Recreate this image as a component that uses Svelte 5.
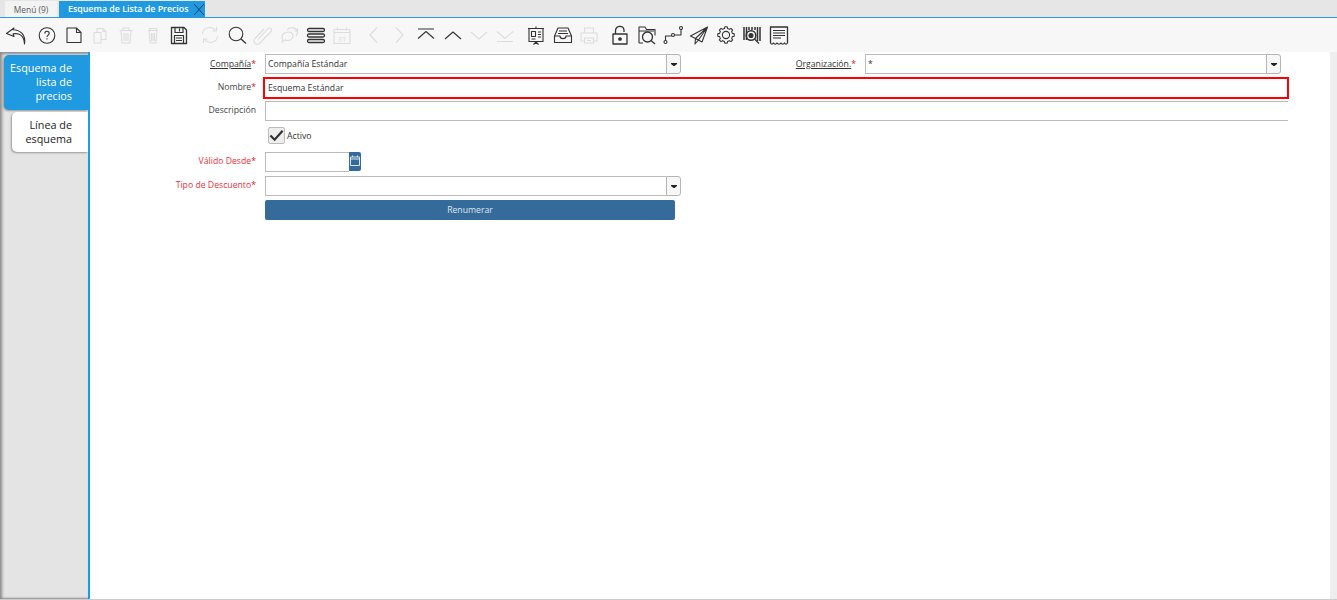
<script>
  const groups = [
    [{ k: 'undo' }],
    [{ k: 'help' }, { k: 'new' }, { k: 'copy', off: true }, { k: 'del', off: true }, { k: 'del', off: true, narrow: true }, { k: 'save' }],
    [{ k: 'refresh', off: true }, { k: 'search' }, { k: 'clip', off: true }, { k: 'chat', off: true }, { k: 'rows' }, { k: 'cal', off: true }],
    [{ k: 'prev', off: true }, { k: 'next', off: true }, { k: 'top' }, { k: 'up' }, { k: 'down', off: true }, { k: 'bottom', off: true }],
    [{ k: 'board' }, { k: 'tray' }, { k: 'print', off: true }],
    [{ k: 'lock' }, { k: 'folder' }, { k: 'route' }, { k: 'send' }, { k: 'gear' }, { k: 'barcode' }, { k: 'report' }]
  ];

  const gearPath = (() => {
    const teeth = 8, cx = 13, cy = 13, ro = 8.3, ri = 6.6;
    const pts = [];
    for (let i = 0; i < teeth; i++) {
      const a = (i / teeth) * Math.PI * 2;
      const s = Math.PI / teeth;
      [[ri, -s * 0.62], [ro, -s * 0.36], [ro, s * 0.36], [ri, s * 0.62]].forEach(([r, d]) => {
        pts.push((cx + r * Math.cos(a + d)).toFixed(2) + ' ' + (cy + r * Math.sin(a + d)).toFixed(2));
      });
    }
    return 'M' + pts.join('L') + 'z';
  })();
</script>

{#snippet dropdown()}
  <span class="drop"><svg width="6" height="3" viewBox="0 0 6 3"><path d="M0 0h6v1L3.500 3h-1L0 1z" fill="#222" /></svg></span>
{/snippet}

<div class="page">
  <header class="tabs">
    <div class="tab">Menú (9)</div>
    <div class="tab active">
      <span>Esquema de Lista de Precios</span>
      <svg width="12" height="13" viewBox="0 0 12 13"><path d="M1 1l10 11M11 1L1 12" stroke="#17405f" stroke-width="1" fill="none" /></svg>
    </div>
  </header>

  <nav class="toolbar">
    {#each groups as g}
      <div class="group">
        {#each g as b}
          <span class="btn" class:off={b.off}>
            <svg width="26" height="26" viewBox="0 0 26 26" fill="none" stroke="currentColor" stroke-width="1.100" stroke-linejoin="round">
              {#if b.k === 'undo'}
                <path d="M11 6L3.500 11.500l7.500 3-1-2.600c6-1 11 1 11.500 10.100 1.500-9-3.500-14-11.500-14.300z" />
              {:else if b.k === 'help'}
                <circle cx="13" cy="13.500" r="7.800" /><path d="M10.800 11.500c0-3 4.400-3 4.400-.2 0 1.800-2.200 1.800-2.200 3.700" /><path d="M13 16.300v1.200" />
              {:else if b.k === 'new'}
                <path d="M6 6h9.500L20 10.500V20.500H6z" /><path d="M15.500 6v4.500H20" />
              {:else if b.k === 'copy'}
                <path d="M7 10.500h7v10.500H7z" /><path d="M10 10V6.500h6l3 3v8h-5" /><path d="M16 6.500v3h3" />
              {:else if b.k === 'del'}
                {#if b.narrow}
                  <path d="M8 8.500h10M9 8.500l1 12.500h6l1-12.500M9.500 6.500h7v2h-7zM11.500 11v8M13 11v8M14.500 11v8" />
                {:else}
                  <path d="M6.500 8.500h13M8 8.500l1 12.500h8l1-12.500M10 6h6v2.500h-6zM11 11v8M13 11v8M15 11v8" />
                {/if}
              {:else if b.k === 'save'}
                <path d="M5.500 5.500h12.500l2.500 2.500v13.500h-15z" stroke-width="1.300" /><path d="M9 5.500v5h8v-5M13.500 6.500v3M8.500 21v-7.500h9V21M10 16h6M10 18.500h6" stroke-width="1.200" />
              {:else if b.k === 'refresh'}
                <path d="M5.500 12c.5-7 9-8.500 13-3.500M20.500 14c-.5 7-9 8.500-13 3.500" /><path d="M19.500 5v4h-4M6.500 21v-4h4" />
              {:else if b.k === 'search'}
                <circle cx="12" cy="12" r="6.800" /><path d="M17 17l5 4.500" stroke-width="1.300" />
              {:else if b.k === 'clip'}
                <path d="M8 17.500L17.500 7c2.500-2.500 5.500.5 3 3L10 21c-3.500 3.500-8-1-5-4.500L14 7" />
              {:else if b.k === 'chat'}
                <path d="M10 10.500c4-1.500 7 .5 7 3.500s-3.500 5.500-8 4l-3 2 .8-3.200c-2-2.500-.5-5.300 3.200-6.300z" /><path d="M11 8c2-3 8-3 10 .5 1 2 .3 4-1 5.500M21.500 6v3h-3" />
              {:else if b.k === 'rows'}
                <rect x="4.500" y="6.500" width="17" height="3" rx="1.500" stroke-width="1.300" /><rect x="4.500" y="12" width="17" height="3" rx="1.500" stroke-width="1.300" /><rect x="4.500" y="17.500" width="17" height="3" rx="1.500" stroke-width="1.300" />
              {:else if b.k === 'cal'}
                <path d="M5 7.500h16v14H5zM5 10.500h16M8.500 5.500v3M17.500 5.500v3" /><text x="13" y="19.500" class="num">31</text>
              {:else if b.k === 'prev'}
                <path d="M17 5.500L10 13l7 7.500" />
              {:else if b.k === 'next'}
                <path d="M9 5.500L16 13l-7 7.500" />
              {:else if b.k === 'top'}
                <path d="M5 7h16M5 16.500l8-7 8 7" />
              {:else if b.k === 'up'}
                <path d="M5 17l8-7 8 7" />
              {:else if b.k === 'down'}
                <path d="M5 10l8 7 8-7" />
              {:else if b.k === 'bottom'}
                <path d="M5 9.500l8 7 8-7M5 19.500h16" />
              {:else if b.k === 'board'}
                <path d="M5 6.500h16M6 6.500v13h14v-13M13 4.500v2M13 19.500v2.500M10.500 22.500l2.500-2.500 2.500 2.500" /><path d="M8.500 9.500h4v5h-4zM8.500 17h4M15 10h3M15 12.500h3M15 15h3" />
              {:else if b.k === 'tray'}
                <path d="M8 6h10l3.500 8v6.500h-17V14z" /><path d="M4.500 14h5.500c0 3.500 6 3.500 6 0h5.500M9 9h8M8 11.500h10" />
              {:else if b.k === 'print'}
                <path d="M8.500 11V6h9v5M5 11h16v8h-3.500M8.500 19H5v-8M8.500 16h9v5h-9zM11 18.500h4" />
              {:else if b.k === 'lock'}
                <path d="M6 12h14v10H6z" stroke-width="1.300" /><path d="M8.500 12V8.500c0-5.500 8.500-5.500 8.500 0v1.500" stroke-width="1.300" /><circle cx="13" cy="17" r="1.300" fill="currentColor" />
              {:else if b.k === 'folder'}
                <path d="M5 21V5h6l1.500 2.500H21v6M9 21H5M5 9h15" /><circle cx="13.500" cy="15" r="5" stroke-width="1.300" /><path d="M17 18.500l4 3.500" stroke-width="1.300" />
              {:else if b.k === 'route'}
                <circle cx="5.500" cy="20" r="1.500" /><circle cx="13" cy="13" r="1.500" /><circle cx="21" cy="6" r="1.500" /><path d="M5.500 18.500V14h6M14.500 13h6.500V7.500" />
              {:else if b.k === 'send'}
                <path d="M21.500 5L4.500 14l5 2.500zM21.500 5L9.500 16.500 9 22l3.500-4zM21.500 5L16 20l-6.500-3.500" />
              {:else if b.k === 'gear'}
                <path d={gearPath} /><circle cx="13" cy="13" r="3.600" />
              {:else if b.k === 'barcode'}
                <path d="M5 5v13M7.500 5v13M10 5v3M13 5v3M16 5v3M18.500 5v14M21 5v14" stroke-width="1.500" /><circle cx="12" cy="13.500" r="4.800" stroke-width="1.500" /><circle cx="12" cy="13.500" r="2" fill="currentColor" /><path d="M15.500 17l4.500 4.500" stroke-width="1.300" />
              {:else if b.k === 'report'}
                <path d="M4.500 5h17v16c-1 1.500-2 1.500-3 0-1 1.500-2.500 1.500-3.500 0-1 1.500-3 1.500-4 0-1 1.500-2.500 1.500-3.500 0-1 1.500-2 1.500-3 0z" stroke-width="1.300" /><path d="M7 8.500h12M7 11h12M7 13.500h12M7 16h8" stroke-width="1.100" />
              {/if}
            </svg>
          </span>
        {/each}
      </div>
    {/each}
  </nav>

  <div class="body">
    <aside class="side">
      <div class="stab current">Esquema de lista de precios</div>
      <div class="stab">Línea de esquema</div>
    </aside>

    <main class="form">
      <label class="lab first"><u>Compañía</u><i>*</i></label>
      <div class="combo">
        <span class="field">Compañía Estándar</span>
        {@render dropdown()}
      </div>
      <label class="lab first"><u>Organización.</u><i>*</i></label>
      <div class="combo">
        <span class="field">*</span>
        {@render dropdown()}
      </div>

      <label class="lab">Nombre<i>*</i></label>
      <div class="wide"><span class="field name">Esquema Estándar</span></div>

      <label class="lab">Descripción</label>
      <div class="wide"><span class="field desc"></span></div>

      <div class="check">
        <span class="box"><svg width="16" height="13" viewBox="0 0 16 13"><path d="M1.500 6.500l4.500 4.500L14.500 1.500" fill="none" stroke="#333" stroke-width="2.400" /></svg></span>
        <span>Activo</span>
      </div>

      <label class="lab req">Válido Desde<i>*</i></label>
      <div class="date">
        <span class="field"></span>
        <span class="calbtn"><svg width="10" height="11" viewBox="0 0 10 11" fill="none" stroke="#d8e4ee"><path d="M.5 2h9v8.500h-9zM.5 4h9M2.500 .5V2M7.500 .5V2" /></svg></span>
      </div>

      <label class="lab req">Tipo de Descuento<i>*</i></label>
      <div class="combo">
        <span class="field"></span>
        {@render dropdown()}
      </div>

      <button class="action">Renumerar</button>
    </main>
  </div>
</div>

<style>
  :global(body) { margin: 0; }
  .page {
    height: 600px;
    width: 1337px;
    display: flex;
    flex-direction: column;
    overflow: hidden;
    font-family: "Open Sans", "Noto Sans", sans-serif;
    font-size: 8.700px;
    color: #333;
    background: #fff;
  }
  .tabs {
    height: 17px;
    display: flex;
    align-items: flex-end;
    gap: 2px;
    padding-left: 5px;
    background: #e6e6e6;
    border-bottom: 1px solid #2a9ad8;
    flex: none;
  }
  .tab {
    width: 52px;
    height: 16px;
    display: flex;
    align-items: center;
    justify-content: center;
    background: #f3f3f3;
    color: #5a5a5a;
    font-size: 8.400px;
    white-space: nowrap;
  }
  .tab.active {
    width: 146px;
    justify-content: flex-start;
    gap: 4px;
    padding-left: 9px;
    box-sizing: border-box;
    background: #1f9ae0;
    color: #fff;
    font-size: 8.850px;
    font-weight: 600;
  }
  .toolbar {
    height: 34px;
    flex: none;
    display: flex;
    align-items: center;
    gap: 4.700px;
    padding-left: 3px;
    background: #f7f7f7;
  }
  .group { display: flex; }
  .btn {
    width: 26.400px;
    height: 26px;
    display: flex;
    justify-content: center;
    color: #333;
  }
  .btn.off { color: #dcdcdc; }
  .btn svg { display: block; overflow: visible; }
  .num {
    font-size: 8px;
    text-anchor: middle;
    fill: currentColor;
    stroke: none;
  }
  .body {
    flex: 1;
    display: flex;
    min-height: 0;
    border-bottom: 1px solid #ccc;
  }
  .side {
    flex: none;
    box-sizing: border-box;
    padding: 3px 0 0 4px;
    background: #e4e4e4;
    box-shadow: inset 3px 3px 3px -1px #8a8a8a, inset 0 -2px 2px -1px #8a8a8a;
    border-right: 2px solid #1f9ae0;
    width: 90px;
    display: flex;
    flex-direction: column;
    align-items: flex-end;
    gap: 2px;
  }
  .stab {
    box-sizing: border-box;
    width: 76px;
    padding: 6px 16px 6px 8px;
    background: #fff;
    border-radius: 5px 0 0 5px;
    box-shadow: -1px 1px 2px #999;
    text-align: right;
    font-size: 10.800px;
    line-height: 14px;
    color: #222;
  }
  .stab.current {
    width: 84px;
    height: 55px;
    padding-left: 2px;
    background: #1f9ae0;
    color: #fff;
    font-weight: 500;
  }
  .form {
    flex: 1;
    align-content: start;
    display: grid;
    grid-template-columns: 166px 416px 166px 416px;
    grid-template-rows: 20px 19px 20px 23px 20px 20px 20px;
    column-gap: 9px;
    row-gap: 4px;
    padding-top: 2px;
    border-right: 7px solid #eee;
    box-sizing: border-box;
  }
  .lab {
    text-align: right;
    line-height: 18px;
    color: #444;
  }
  .lab.first { line-height: 20px; }
  .lab u { text-decoration: underline; color: #333; }
  .lab i { color: #e01010; font-style: normal; }
  .lab.req { color: #e8323c; grid-column: 1; }
  .field {
    display: block;
    box-sizing: border-box;
    height: 20px;
    padding-left: 3px;
    background: #fff;
    border: 1px solid #bbb;
    line-height: 17px;
    color: #333;
  }
  .combo { display: flex; width: 416px; }
  .combo .field { flex: 1; border-right: 0; padding-left: 2px; line-height: 18px; }
  .drop {
    width: 13px;
    height: 18px;
    flex: none;
    display: flex;
    align-items: center;
    justify-content: center;
    background: #f7f7f7;
    border: 1px solid #b5b5b5;
    border-radius: 0 3px 3px 0;
  }
  .wide { grid-column: 2 / 5; }
  .name {
    width: 1026px;
    height: 22px;
    margin: -1px 0 0 -2px;
    border: 2px solid #f00;
    line-height: 18px;
  }
  .desc {
    width: 1023px;
    border-right: 0;
  }
  .check {
    grid-column: 2 / 5;
    display: flex;
    align-items: center;
    align-self: start;
    gap: 2px;
    padding: 2px 0 0 3px;
  }
  .box {
    box-sizing: border-box;
    width: 17px;
    height: 17px;
    display: flex;
    align-items: center;
    justify-content: center;
    background: #eee;
    border: 1px solid #bbb;
    border-radius: 2px;
  }
  .date { display: flex; grid-column: 2; }
  .date .field { width: 84px; border-right: 0; }
  .calbtn {
    width: 12px;
    height: 19px;
    display: flex;
    align-items: flex-start;
    justify-content: center;
    padding-top: 3px;
    box-sizing: border-box;
    background: #346b9a;
    border-radius: 0 2px 2px 0;
  }
  .action {
    grid-column: 2;
    width: 410px;
    height: 20px;
    padding: 0;
    border: 0;
    border-radius: 2px;
    background: #346b9a;
    color: #dfe7ee;
    font: 8.700px "Open Sans", "Noto Sans", sans-serif;
  }
</style>
